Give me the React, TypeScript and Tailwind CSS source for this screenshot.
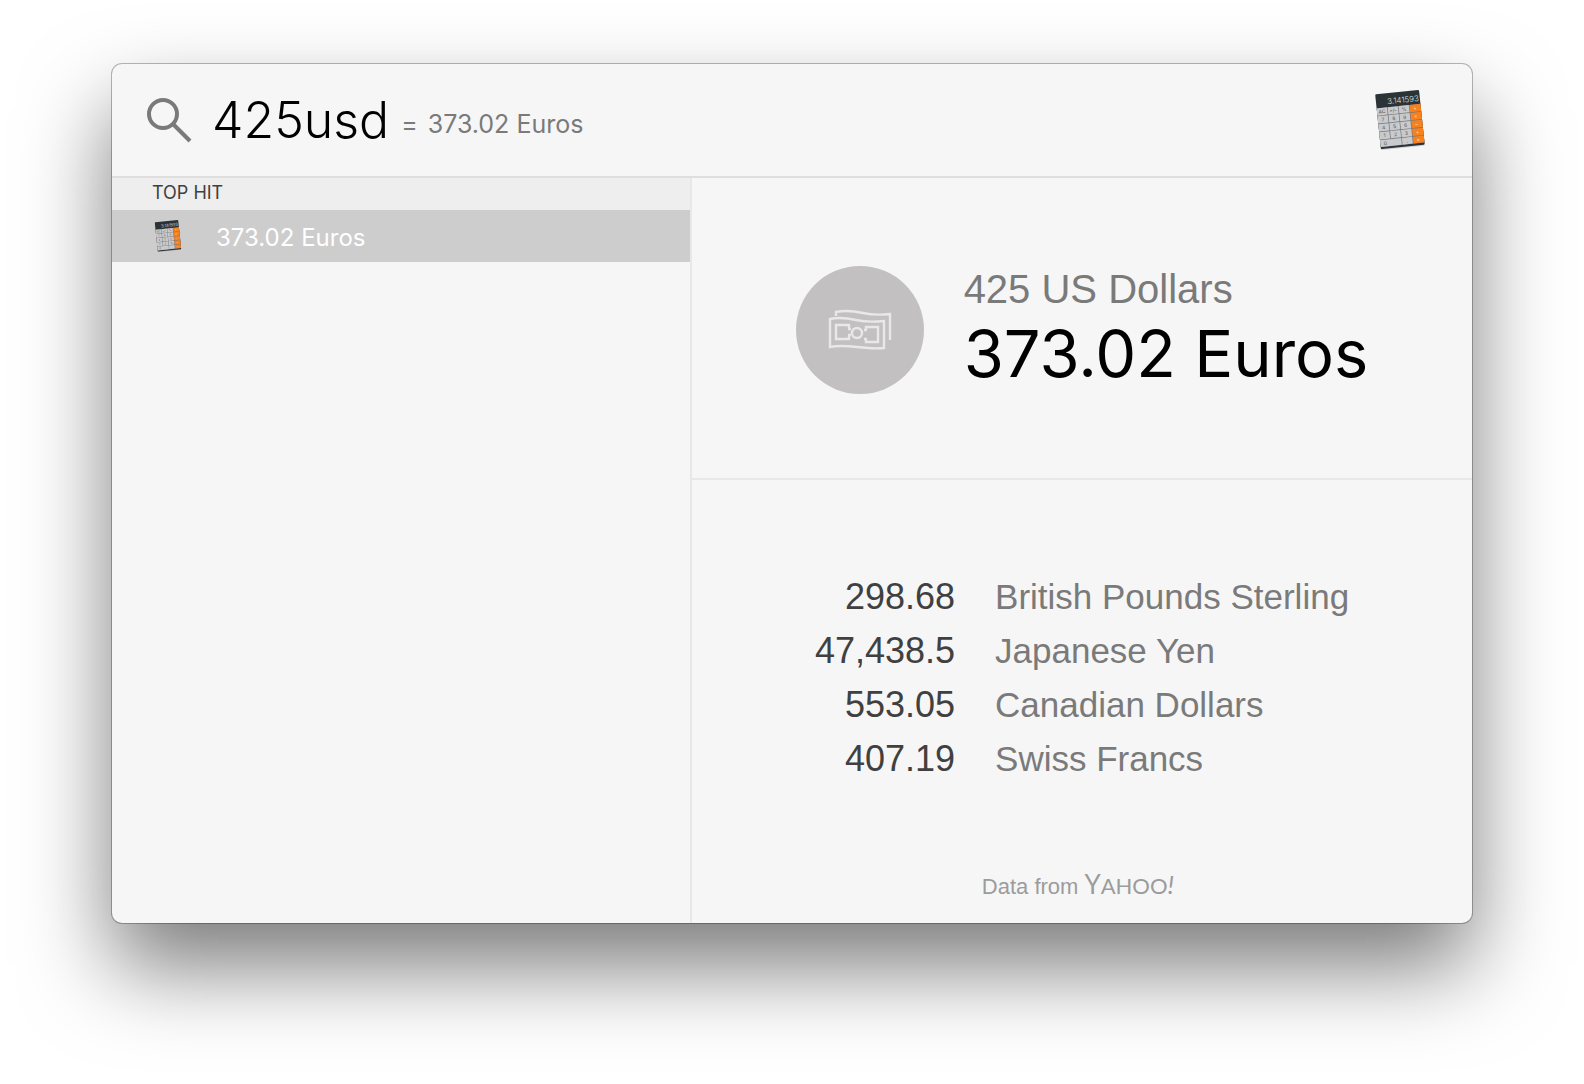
import React from "react";

const rates = [
  { value: "298.68", name: "British Pounds Sterling" },
  { value: "47,438.5", name: "Japanese Yen" },
  { value: "553.05", name: "Canadian Dollars" },
  { value: "407.19", name: "Swiss Francs" },
];

const keys = [
  ["AC", "+/-", "%", "÷"],
  ["7", "8", "9", "×"],
  ["4", "5", "6", "−"],
  ["1", "2", "3", "+"],
];

function SearchIcon() {
  return (
    <svg className="h-12 w-12 overflow-visible" viewBox="0 0 48 48" fill="none" stroke="#7a7a7a" strokeWidth="4" role="img" aria-label="Search">
      <circle cx="15" cy="18" r="14" />
      <path d="M25 28 42 45" />
    </svg>
  );
}

function CalculatorIcon({ className }: { className: string }) {
  return (
    <svg className={className} viewBox="0 0 60 64" aria-hidden="true">
      <g transform="rotate(-6 30 32)" fontFamily="Inter, sans-serif" textAnchor="middle">
        <rect x="8" y="6" width="44" height="54" rx="1" fill="#000" opacity="0.15" />
        <rect x="8" y="4" width="44" height="55" rx="1" fill="#2b3337" />
        <rect x="8" y="18" width="44" height="39" fill="#77787b" />
        <text x="51" y="15" fontSize="8" fontWeight="300" fill="#dfe6e6" textAnchor="end">3.141593</text>
        {keys.map((row, r) =>
          row.map((key, c) => (
            <g key={key}>
              <rect x={8 + c * 11} y={18 + r * 8} width={c === 3 ? 11 : 10.3} height="7.3" fill={c === 3 ? "#f5811f" : "#c9cacd"} />
              <text x={13 + c * 11} y={23.5 + r * 8} fontSize="5" fill={c === 3 ? "#ffe0c0" : "#555"}>
                {key}
              </text>
            </g>
          )),
        )}
        <rect x="8" y="50" width="21.3" height="6.8" fill="#c9cacd" />
        <rect x="30" y="50" width="10.3" height="6.8" fill="#c9cacd" />
        <rect x="41" y="50" width="11" height="6.8" fill="#f5811f" />
        <text x="13" y="55.5" fontSize="5" fill="#555">0</text>
        <text x="35" y="55.5" fontSize="5" fill="#555">.</text>
        <text x="46" y="55.5" fontSize="5" fill="#ffe0c0">=</text>
      </g>
    </svg>
  );
}

function BanknotesIcon() {
  return (
    <svg className="h-11 w-16 overflow-visible" viewBox="0 0 64 44" fill="none" stroke="#e9e8e9" strokeWidth="2.4" aria-hidden="true">
      <path d="M2 11c9-2 17-1 26 1s18 2 28 1v27c-9 1-18 0-27-1s-18-2-27 0z" />
      <path d="M8 8V4c9-2 18-1 27 1s18 2 27 1v26" />
      <path d="M21 20v-3H8v14h13v-4" />
      <path d="M38 22v-3h12v15H38v-3" />
      <circle cx="29" cy="25" r="5" />
      <path d="M20 21h3M20 27h3M39 22h-3M39 31h-3" />
    </svg>
  );
}

export default function App() {
  return (
    <div className="min-h-screen bg-white px-28 py-16 font-[Inter,sans-serif]">
      <main className="overflow-clip rounded-[10px] bg-[#f6f6f6] shadow-[0_0_0_1px_rgba(0,0,0,0.27),0_44px_88px_rgba(0,0,0,0.52)]">
        <header className="flex h-28 items-center pr-10 pl-9">
          <label htmlFor="query" className="shrink-0">
            <SearchIcon />
          </label>
          <input
            id="query"
            type="text"
            defaultValue="425usd"
            className="ml-4 field-sizing-content bg-transparent text-[50px] leading-16 font-light text-black outline-none"
          />
          <output htmlFor="query" className="ml-3 flex gap-2.5 pt-2 text-[25px] leading-8 text-[#7a7a7a]">
            <span>=</span>
            <span>373.02 Euros</span>
          </output>
          <CalculatorIcon className="ml-auto h-16 w-16" />
        </header>

        <div className="grid grid-cols-[580fr_780fr] border-t-2 border-[#dedede]">
          <section className="border-r-2 border-[#e8e8e8]">
            <h2 className="h-8 bg-[#eeeeee] pl-10 text-[18px] leading-[30px] text-[#404040]">TOP HIT</h2>
            <ul>
              <li>
                <button type="button" className="flex h-13 w-full items-center bg-[#cdcdcd] pl-10 text-left text-[24px] leading-8 text-white">
                  <CalculatorIcon className="h-9 w-8" />
                  <span className="ml-8 pt-1">373.02 Euros</span>
                </button>
              </li>
            </ul>
          </section>

          <div>
            <section className="flex h-[302px] items-center justify-center gap-10 border-b-2 border-[#e8e8e8] pt-1">
              <div className="flex h-32 w-32 shrink-0 items-center justify-center rounded-full bg-[#c2c0c1]">
                <BanknotesIcon />
              </div>
              <div>
                <p className="font-['Liberation_Sans',sans-serif] text-[40px] leading-12 text-[#7a7a7a]">425 US Dollars</p>
                <p className="text-[65px] leading-[82px] text-black">373.02 Euros</p>
              </div>
            </section>

            <section className="pt-[90px] pb-[18px] font-['Liberation_Sans',sans-serif]">
              <table className="mx-auto">
                <tbody>
                  {rates.map((rate) => (
                    <tr key={rate.name} className="h-[54px]">
                      <td className="text-right text-[36px] leading-10 text-[#404040]">{rate.value}</td>
                      <th scope="row" className="pl-10 text-left text-[35px] leading-10 font-normal text-[#7a7a7a]">
                        {rate.name}
                      </th>
                    </tr>
                  ))}
                </tbody>
              </table>
              <p className="mt-20 mr-2 flex items-baseline justify-center gap-1.5 text-[22px] leading-9 text-[#9c9c9c]">
                Data from
                <span className="font-[Lato,sans-serif] text-[22px]">
                  <span className="text-[26px]">Y</span>AHOO<i className="text-[26px]">!</i>
                </span>
              </p>
            </section>
          </div>
        </div>
      </main>
    </div>
  );
}
